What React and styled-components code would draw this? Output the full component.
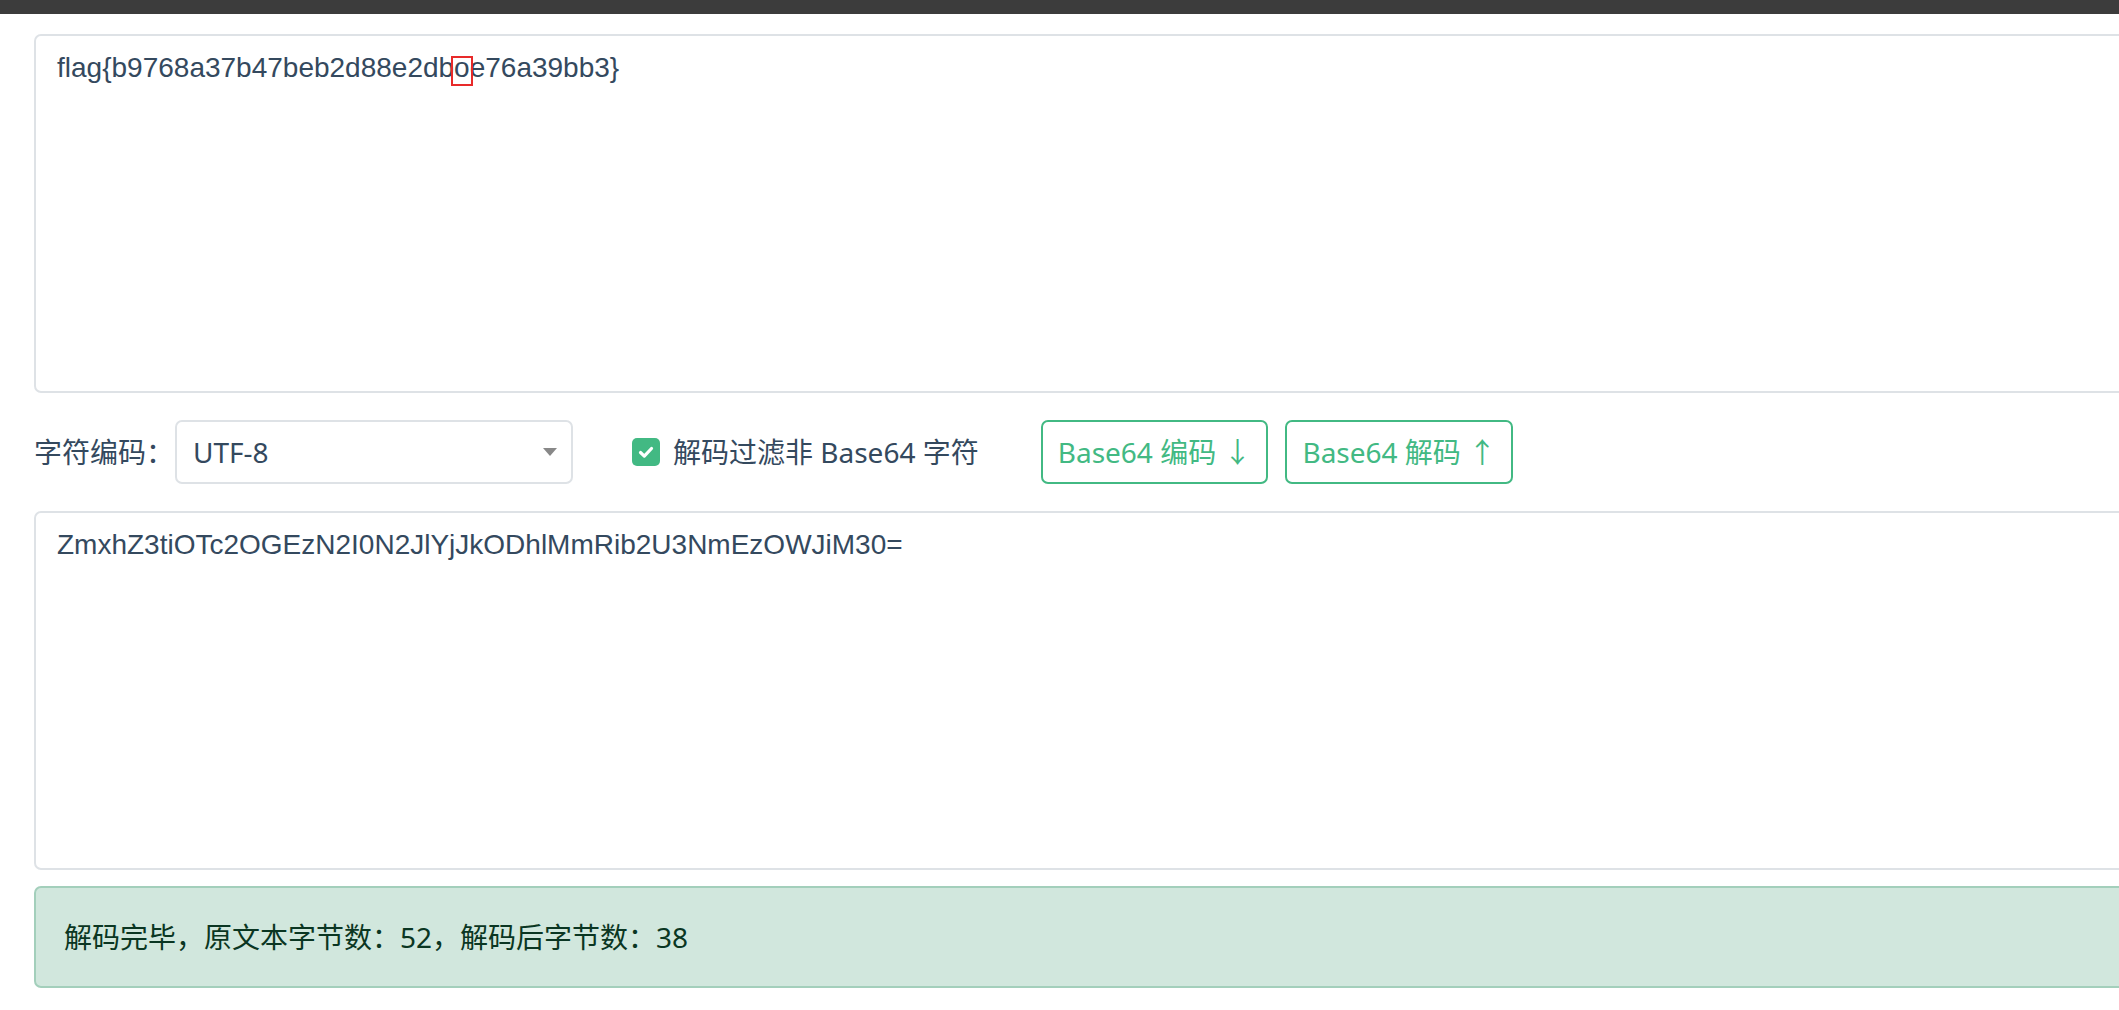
import React from 'react'
import styled, { createGlobalStyle } from 'styled-components'

const GlobalStyle = createGlobalStyle`
  body {
    margin: 0;
    overflow: hidden;
    background: #fff;
  }
`

const ui = '"Noto Sans", "Noto Sans CJK SC", sans-serif'
const green = '#42b983'
const ink = '#34495e'

const TopBar = styled.div`
  height: 14px;
  background: #3c3c3c;
`

const Main = styled.main`
  width: 2400px;
  padding: 20px 0 0 34px;
  font-family: ${ui};
  font-size: 28px;
  line-height: 1.5;
  color: ${ink};
`

const TextBox = styled.div`
  box-sizing: border-box;
  height: 359px;
  padding: 10.5px 21px;
  border: 2px solid #dee2e6;
  border-radius: 7px;
  font-family: "Liberation Sans", Arial, sans-serif;
  font-size: 28px;
  line-height: 1.5;
  color: ${ink};
  white-space: pre-wrap;
`

// red annotation box drawn over one letter
const Mark = styled.span`
  position: relative;
  &::after {
    content: '';
    position: absolute;
    top: 4px;
    bottom: -3px;
    left: -3px;
    right: -3px;
    border: 2px solid #e82a2a;
  }
`

const ControlRow = styled.div`
  display: flex;
  align-items: center;
  height: 64px;
  margin: 27px 0;
`

const Label = styled.span`
  width: 141px;
`

const SelectBox = styled.div`
  box-sizing: border-box;
  width: 398px;
  height: 64px;
  display: flex;
  align-items: center;
  justify-content: space-between;
  padding: 0 13px 0 16px;
  border: 2px solid #dee2e6;
  border-radius: 7px;
`

const Check = styled.label`
  display: flex;
  align-items: center;
  gap: 13px;
  margin-left: 59px;
`

const CheckBox = styled.span`
  width: 28px;
  height: 28px;
  border-radius: 5px;
  background: ${green};
  display: flex;
  align-items: center;
  justify-content: center;
`

const ButtonGroup = styled.div`
  display: flex;
  gap: 17px;
  margin-left: 62px;
`

const OutlineButton = styled.button`
  box-sizing: border-box;
  height: 64px;
  padding: 0 15px;
  border: 2px solid ${green};
  border-radius: 7px;
  background: #fff;
  color: ${green};
  font-family: ${ui};
  font-size: 28px;
  line-height: 1.5;
`

const Alert = styled.div`
  box-sizing: border-box;
  height: 102px;
  margin-top: 16px;
  padding: 28px;
  border: 2px solid #a3cfbb;
  border-radius: 7px;
  background: #d1e7dd;
  color: #0a3622;
`

export default function App() {
  return (
    <>
      <GlobalStyle />
      <TopBar />
      <Main>
        <TextBox>
          flag{'{'}b9768a37b47beb2d88e2db<Mark>o</Mark>e76a39bb3{'}'}
        </TextBox>
        <ControlRow>
          <Label>字符编码：</Label>
          <SelectBox>
            <span>UTF-8</span>
            <svg width="16" height="10" viewBox="0 0 16 10">
              <path d="M1 1h14L8 9z" fill="#888" />
            </svg>
          </SelectBox>
          <Check>
            <CheckBox>
              <svg width="20" height="20" viewBox="0 0 20 20">
                <path d="M4.5 10.5l3.8 3.6L15.5 6.5" fill="none" stroke="#fff" strokeWidth="3.2" strokeLinecap="round" strokeLinejoin="round" />
              </svg>
            </CheckBox>
            解码过滤非 Base64 字符
          </Check>
          <ButtonGroup>
            <OutlineButton>Base64 编码 ↓</OutlineButton>
            <OutlineButton>Base64 解码 ↑</OutlineButton>
          </ButtonGroup>
        </ControlRow>
        <TextBox>ZmxhZ3tiOTc2OGEzN2I0N2JlYjJkODhlMmRib2U3NmEzOWJiM30=</TextBox>
        <Alert>解码完毕，原文本字节数：52，解码后字节数：38</Alert>
      </Main>
    </>
  )
}
